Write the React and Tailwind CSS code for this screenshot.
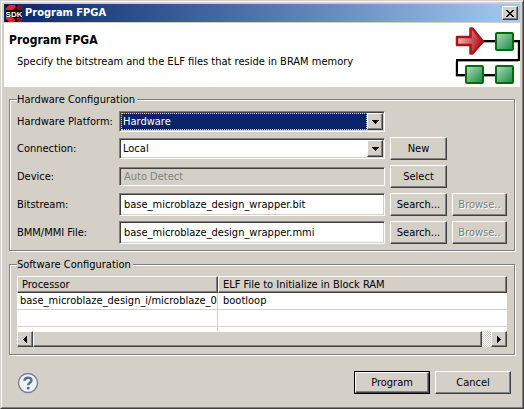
import React from "react";

const raised =
  "border border-t-white border-l-white border-r-[#404040] border-b-[#404040] shadow-[inset_-1px_-1px_0_#808080]";
const sunken =
  "border border-t-[#808080] border-l-[#808080] border-r-white border-b-white shadow-[inset_1px_1px_0_#404040,inset_-1px_-1px_0_#d4d0c8]";
const group =
  "min-w-0 border border-[#808080] px-[7px] shadow-[1px_1px_0_#fff,inset_1px_1px_0_#fff]";
const legend = "bg-[#d4d0c8] pr-0.5 pt-0.5 leading-[14px]";
const headCell = `h-[17px] whitespace-nowrap p-0 pt-px font-normal leading-[14px] ${raised}`;
const processorCell = "border-r border-b border-[#d4d0c8] p-0";
const fileCell = "border-b border-[#d4d0c8] p-0";

function Button({ className = "", disabled = false, children }) {
  const tone = disabled ? "text-[#808080] [text-shadow:1px_1px_0_#fff]" : "";
  return (
    <button
      type="button"
      disabled={disabled}
      className={`whitespace-nowrap bg-[#d4d0c8] text-center leading-4 ${raised} ${tone} ${className}`}
    >
      {children}
    </button>
  );
}

function Combo({ id, value, active = false }) {
  return (
    <div className={`relative flex h-[21px] bg-white p-px ${sunken}`}>
      <select
        id={id}
        defaultValue={value}
        className={`w-full min-w-0 appearance-none pl-px leading-4 outline-none ${
          active
            ? "mr-4 border border-dotted border-[#f5db95] bg-[#0a246a] text-white"
            : "border border-white bg-white"
        }`}
      >
        <option>{value}</option>
      </select>
      <span
        className={`pointer-events-none absolute inset-y-px right-px flex w-4 items-center justify-center bg-[#d4d0c8] ${raised}`}
      >
        <svg width="7" height="4" viewBox="0 0 7 4" shapeRendering="crispEdges">
          <path d="M0 0h7v1H6v1H5v1H4v1H3V3H2V2H1V1H0z" />
        </svg>
      </span>
    </div>
  );
}

function Field({ id, value, disabled = false }) {
  return (
    <input
      id={id}
      type="text"
      defaultValue={value}
      disabled={disabled}
      className={`w-full min-w-0 self-center px-1 leading-4 outline-none ${sunken} ${
        disabled ? "h-[19px] bg-[#d4d0c8] text-[#808080]" : "h-[23px] bg-white"
      }`}
    />
  );
}

function Label({ htmlFor, children }) {
  return (
    <label htmlFor={htmlFor} className="self-center whitespace-nowrap leading-4">
      {children}
    </label>
  );
}

function SdkLogo() {
  return (
    <svg width="16" height="17" viewBox="0 0 16 17" aria-label="SDK" role="img">
      <rect width="16" height="17" fill="#0c0405" />
      <path d="M3 0h6l1 2-3 3H0V3z" fill="#e0262a" />
      <path d="M12 0h4v5h-3l-3-2z" fill="#7d1116" />
      <path d="M0 12h6l3 3-1 2H3L0 14z" fill="#e0262a" />
      <path d="M10 13h6v4h-4z" fill="#8f1318" />
      <text
        x="8"
        y="12"
        textAnchor="middle"
        fill="#fff"
        fontFamily="Liberation Sans, sans-serif"
        fontWeight="700"
        fontSize="8"
      >
        SDK
      </text>
    </svg>
  );
}

function Node({ x, y }) {
  return (
    <rect
      x={x}
      y={y}
      width="17"
      height="17"
      rx="1"
      fill="url(#node)"
      stroke="#006b0b"
      strokeWidth="2"
    />
  );
}

function FlowArt() {
  return (
    <svg width="65" height="60" viewBox="0 0 65 60" aria-hidden="true" className="shrink-0">
      <defs>
        <linearGradient id="node" x1="0" y1="0" x2="1" y2="1">
          <stop offset="0" stopColor="#b4dcc0" />
          <stop offset="1" stopColor="#138a3d" />
        </linearGradient>
        <linearGradient id="arrow" x1="0" y1="0" x2="1" y2="0.3">
          <stop offset="0" stopColor="#f0d8da" />
          <stop offset="1" stopColor="#b8141b" />
        </linearGradient>
      </defs>
      <path d="M28 16.500H63V35.500H1V50.500H40" fill="none" stroke="#a0a0a0" strokeWidth="1" />
      <path d="M28 15H64V34H2V49H40" fill="none" stroke="#000" strokeWidth="2" />
      <path
        d="M2 11h13.500V2.500h2L28 15.500 17.500 27.500h-2V19H2z"
        fill="url(#arrow)"
        stroke="#ac1416"
        strokeWidth="2.500"
        strokeLinejoin="round"
      />
      <Node x="41" y="7" />
      <Node x="11" y="40" />
      <Node x="41" y="40" />
    </svg>
  );
}

function ScrollArrow({ label, path }) {
  return (
    <button
      type="button"
      aria-label={label}
      className={`flex h-4 w-4 shrink-0 items-center justify-center bg-[#d4d0c8] ${raised}`}
    >
      <svg width="4" height="7" viewBox="0 0 4 7" shapeRendering="crispEdges">
        <path d={path} />
      </svg>
    </button>
  );
}

export default function App() {
  return (
    <main className="border border-t-[#d4d0c8] border-l-[#d4d0c8] border-r-[#404040] border-b-[#404040] bg-[#d4d0c8] font-['DejaVu_Sans_Condensed','DejaVu_Sans',sans-serif] text-[11px] text-black">
      <div className="border border-t-white border-l-white border-r-[#808080] border-b-[#808080] p-0.5">
        <header className="flex h-[18px] items-center gap-[3px] bg-linear-to-r from-[#0a246a] to-[#a6caf0] px-0.5">
          <SdkLogo />
          <h1 className="grow font-bold leading-4 text-white">Program FPGA</h1>
          <button
            type="button"
            aria-label="Close"
            className={`flex h-3.5 w-4 items-center justify-center bg-[#d4d0c8] ${raised}`}
          >
            <svg width="8" height="7" viewBox="0 0 8 7" shapeRendering="crispEdges">
              <path d="M0 0h2v1h1v1h2V1h1V0h2v1H7v1H6v1H5v1h1v1h1v1h1v1H6V6H5V5H3v1H2v1H0V6h1V5h1V4h1V3H2V2H1V1H0z" />
            </svg>
          </button>
        </header>

        <section className="mt-px flex h-16 items-start justify-between bg-white">
          <div className="pl-[5px] pt-[9px]">
            <h2 className="text-xs font-bold leading-4">Program FPGA</h2>
            <p className="pl-2 pt-1.5 leading-4">
              Specify the bitstream and the ELF files that reside in BRAM memory
            </p>
          </div>
          <div className="pt-[3px]">
            <FlowArt />
          </div>
        </section>

        <form className="px-[5px] pb-[11px] pt-1" onSubmit={(e) => e.preventDefault()}>
          <fieldset className={`${group} pb-1.5`}>
            <legend className={legend}>Hardware Configuration</legend>
            <div className="grid grid-cols-[97px_minmax(0,1fr)_57px_55px] gap-[5px] pt-1">
              <Label htmlFor="platform">Hardware Platform:</Label>
              <Combo id="platform" value="Hardware" active />
              <span className="col-span-2" />

              <Label htmlFor="connection">Connection:</Label>
              <div className="self-center">
                <Combo id="connection" value="Local" />
              </div>
              <Button className="h-[23px]">New</Button>
              <span />

              <Label htmlFor="device">Device:</Label>
              <Field id="device" value="Auto Detect" disabled />
              <Button className="h-[23px]">Select</Button>
              <span />

              <Label htmlFor="bitstream">Bitstream:</Label>
              <Field id="bitstream" value="base_microblaze_design_wrapper.bit" />
              <Button className="h-[23px]">Search...</Button>
              <Button className="h-[23px]" disabled>Browse..</Button>

              <Label htmlFor="bmm">BMM/MMI File:</Label>
              <Field id="bmm" value="base_microblaze_design_wrapper.mmi" />
              <Button className="h-[23px]">Search...</Button>
              <Button className="h-[23px]" disabled>Browse..</Button>
            </div>
          </fieldset>

          <fieldset className={`${group} mt-[5px] pb-[7px]`}>
            <legend className={legend}>Software Configuration</legend>
            <div className="pt-1">
              <table className="w-full table-fixed border-separate border-spacing-0 bg-white text-left">
                <thead>
                  <tr className="bg-[#d4d0c8]">
                    <th className={`w-[201px] pl-0.5 ${headCell}`}>
                      <span className="pl-0.5">Processor</span>
                    </th>
                    <th className={headCell}>
                      <span className="pl-1">ELF File to Initialize in Block RAM</span>
                    </th>
                  </tr>
                </thead>
                <tbody>
                  <tr className="h-[17px]">
                    <td className={`whitespace-nowrap leading-4 ${processorCell}`}>
                      <span className="pl-[3px]">base_microblaze_design_i/microblaze_0</span>
                    </td>
                    <td className={`leading-4 ${fileCell}`}>
                      <span className="pl-[5px]">bootloop</span>
                    </td>
                  </tr>
                  <tr className="h-[17px]">
                    <td className={processorCell} />
                    <td className={fileCell} />
                  </tr>
                  <tr className="h-1">
                    <td className="border-r border-[#d4d0c8] p-0" />
                    <td className="p-0" />
                  </tr>
                </tbody>
              </table>
              <div className="flex h-4 bg-[repeating-conic-gradient(#fff_0_25%,#d4d0c8_0_50%)] bg-[length:2px_2px]">
                <ScrollArrow label="Scroll left" path="M3 0h1v7H3V6H2V5H1V4H0V3h1V2h1V1h1z" />
                <div className={`mr-[9px] grow bg-[#d4d0c8] ${raised}`} />
                <ScrollArrow label="Scroll right" path="M0 0h1v1h1v1h1v1h1v1H3v1H2v1H1v1H0z" />
              </div>
            </div>
          </fieldset>

          <footer className="mt-4 flex items-center gap-[5px] pl-2 pr-1">
            <button type="button" aria-label="Help" className="mr-auto">
              <svg width="22" height="22" viewBox="0 0 22 22">
                <circle cx="11" cy="11" r="9.500" fill="#f2f3f6" stroke="#7485a3" strokeWidth="1.500" />
                <path
                  d="M7.500 8.800C7.500 4.700 14.500 4.700 14.500 8.300 14.500 10.800 11.200 10.600 11.200 13.200"
                  fill="none"
                  stroke="#566c93"
                  strokeWidth="2.500"
                />
                <rect x="9.800" y="14.800" width="2.800" height="2.600" rx="1" fill="#566c93" />
              </svg>
            </button>
            <div className="flex border border-black">
              <Button className="h-[21px] w-[74px]">Program</Button>
            </div>
            <Button className="h-[23px] w-[76px]">Cancel</Button>
          </footer>
        </form>
      </div>
    </main>
  );
}
